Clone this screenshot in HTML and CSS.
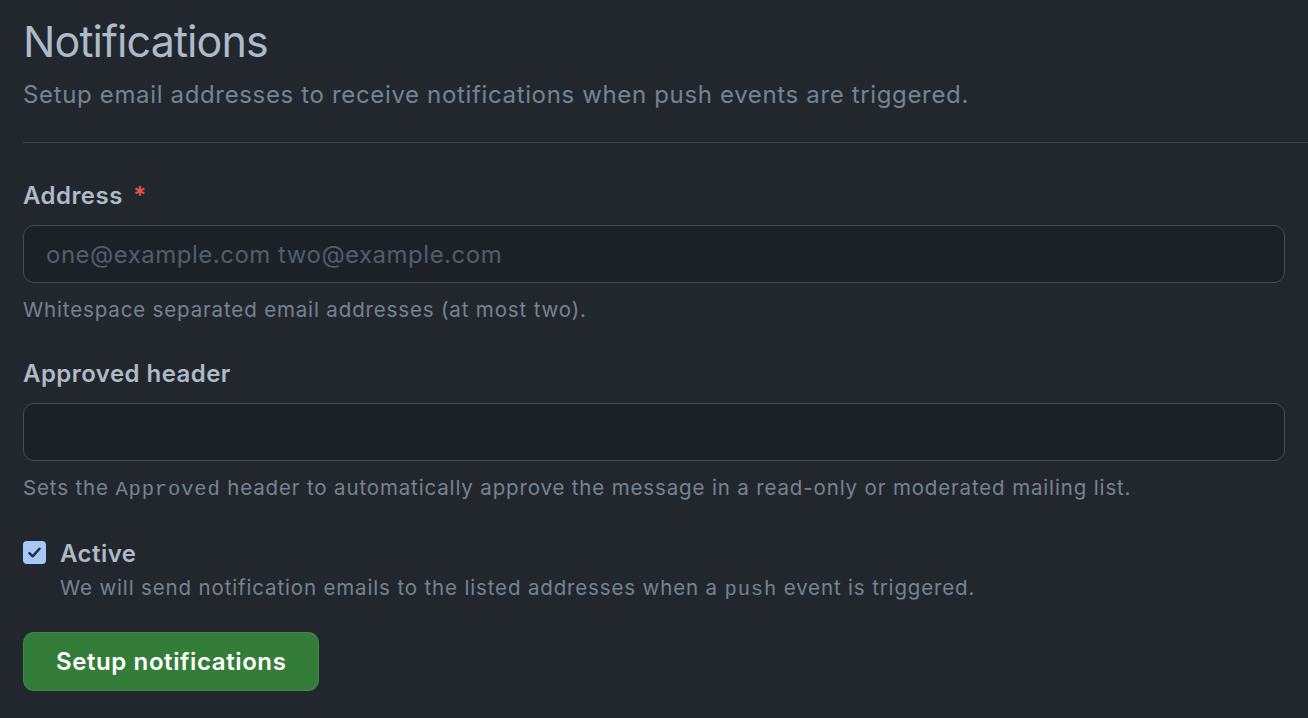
FILE: index.html
```html
<!DOCTYPE html>
<html lang="en">
<head>
<meta charset="utf-8">
<title>Notifications</title>
<link rel="stylesheet" href="styles.css">
</head>
<body>
<main class="page">
  <header class="subhead">
    <h1 class="subhead-title">Notifications</h1>
    <p class="subhead-desc">Setup email addresses to receive notifications when push events are triggered.</p>
  </header>
  <form class="form">
    <div class="field">
      <label class="field-label" for="address">Address <span class="required">*</span></label>
      <input class="field-input" id="address" type="text" placeholder="one@example.com two@example.com">
      <p class="note">Whitespace separated email addresses (at most two).</p>
    </div>
    <div class="field">
      <label class="field-label" for="approved">Approved header</label>
      <input class="field-input" id="approved" type="text">
      <p class="note">Sets the <code class="mono">Approved</code> header to automatically approve the message in a read-only or moderated mailing list.</p>
    </div>
    <div class="check">
      <span class="check-box" aria-hidden="true">
        <svg viewBox="0 0 16 16" width="17" height="17"><path d="M3.2 8.6 6.3 11.7 12.8 4.4" fill="none" stroke="#2b3038" stroke-width="2.3" stroke-linecap="round" stroke-linejoin="round"/></svg>
      </span>
      <div class="check-text">
        <span class="check-label">Active</span>
        <p class="note note-check">We will send notification emails to the listed addresses when a <code class="mono">push</code> event is triggered.</p>
      </div>
    </div>
    <button class="btn" type="button">Setup notifications</button>
  </form>
</main>
</body>
</html>
```

FILE: styles.css
```css
html, body {
  margin: 0;
  padding: 0;
  background: #22272e;
}
body {
  font-family: Inter, "Liberation Sans", Arial, sans-serif;
  color: #adbac7;
  overflow: hidden;
}
.page {
  padding: 14px 0 0 23px;
}
.subhead {
  border-bottom: 1.5px solid #3a414a;
  padding-bottom: 28px;
}
.subhead-title {
  margin: 0;
  font-size: 43px;
  font-weight: 400;
  line-height: 54px;
  letter-spacing: -0.9px;
  color: #adbac7;
}
.subhead-desc {
  margin: 8px 0 0;
  font-size: 24px;
  line-height: 38px;
  letter-spacing: 0.65px;
  color: #768390;
}
.form {
  padding-right: 23px;
  padding-top: 34px;
}
.field {
  margin-bottom: 28px;
}
.field-label {
  display: block;
  font-size: 24px;
  font-weight: 600;
  line-height: 38px;
  letter-spacing: 0.45px;
  margin-bottom: 10px;
}
.required {
  color: #e5534b;
  margin-left: 4px;
}
.field-input {
  display: block;
  box-sizing: border-box;
  width: 100%;
  height: 58px;
  padding: 0 22px;
  background: #1c2128;
  border: 1.8px solid #444c56;
  border-radius: 11px;
  font-family: inherit;
  font-size: 24px;
  letter-spacing: 0.5px;
  color: #adbac7;
  outline: none;
}
.field-input::placeholder {
  color: #545d68;
}
.note {
  margin: 10px 0 0;
  font-size: 20.5px;
  line-height: 34px;
  letter-spacing: 0.85px;
  color: #768390;
}
.mono {
  font-family: "Liberation Mono", "DejaVu Sans Mono", monospace;
  font-size: 20.5px;
}
.check {
  display: flex;
  gap: 14px;
  align-items: flex-start;
  margin-top: 2px;
}
.check-box {
  flex: none;
  width: 23px;
  height: 23px;
  margin-top: 6px;
  border-radius: 4px;
  background: #a4c8f7;
  display: flex;
  align-items: center;
  justify-content: center;
}
.check-label {
  display: block;
  font-size: 24px;
  font-weight: 600;
  line-height: 38px;
  letter-spacing: 0.45px;
}
.note-check {
  margin-top: -2px;
}
.btn {
  margin-top: 25px;
  height: 59px;
  padding: 0 32px;
  background: #347d39;
  border: 1.8px solid rgba(205, 217, 229, 0.1);
  border-radius: 11px;
  color: #ffffff;
  font-family: inherit;
  font-size: 24px;
  font-weight: 600;
  letter-spacing: 0.6px;
  cursor: pointer;
}
```
